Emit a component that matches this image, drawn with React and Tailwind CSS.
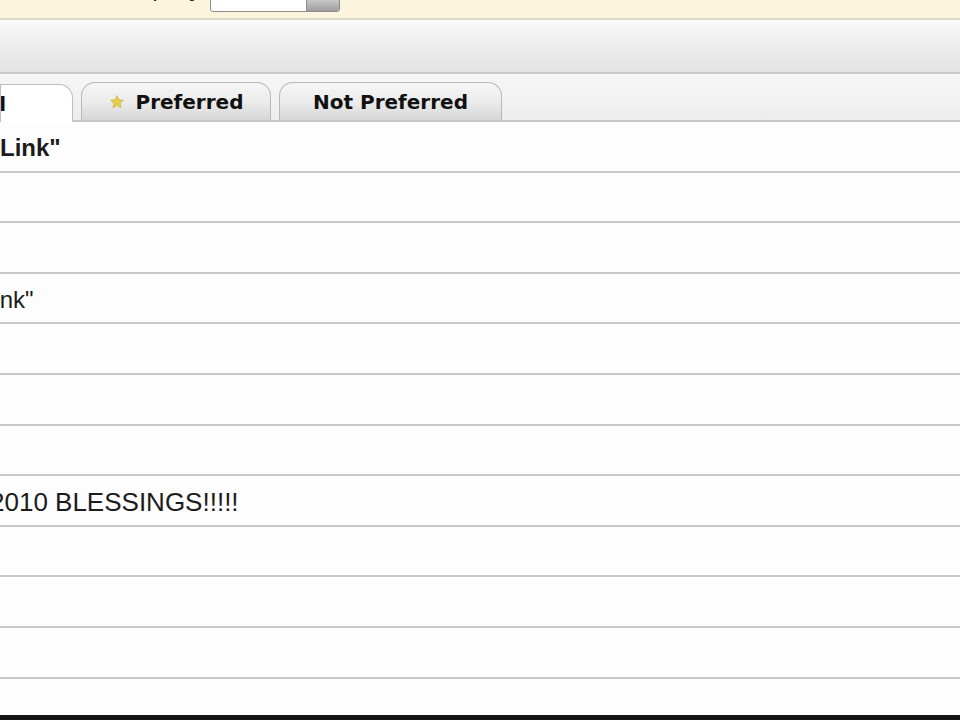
import React from "react";

const tabs = [
  { label: "Preferred", star: true, width: "w-[190px]" },
  { label: "Not Preferred", star: false, width: "w-[223px]" },
];

// rows of the list; only some carry a visible title
const rows = [
  { text: "Link\"", bold: true, shift: "ml-0" },
  null,
  null,
  { text: "Link\"", bold: false, shift: "ml-[-19px]" },
  null,
  null,
  null,
  { text: "2010 BLESSINGS!!!!!", bold: false, shift: "ml-[-10px]", big: true },
  null,
  null,
  null,
  null,
];

const Star = () => (
  <svg width="16" height="16" viewBox="0 0 24 24" className="shrink-0">
    <path
      d="M12 2.5l2.9 6.1 6.6.8-4.9 4.6 1.3 6.6L12 17.3l-5.9 3.3 1.3-6.6-4.9-4.6 6.6-.8z"
      fill="#e6cd52"
      stroke="#c9ad2a"
      strokeWidth="1"
    />
  </svg>
);

export default function App() {
  return (
    <div className="w-[960px] h-[720px] overflow-hidden bg-[#fdfdfd] flex flex-col font-['Liberation_Sans',Arial,sans-serif]">
      {/* filter bar */}
      <div className="h-[20px] shrink-0 bg-[#fcf4dd] border-b-2 border-[#dcd7c8] flex overflow-hidden">
        <span className="w-[96px] ml-[114px] mt-[-22px] text-[24px] leading-[20px] text-[#222] font-['DejaVu_Sans',sans-serif] whitespace-nowrap overflow-hidden">
          Display)
        </span>
        <div className="mt-[-5px] h-[17px] w-[130px] flex border border-[#8d8d8d] rounded-b-[3px] bg-white overflow-hidden">
          <div className="flex-1" />
          <div className="w-[33px] bg-gradient-to-b from-[#d8d8d8] to-[#9e9e9e] border-l border-[#8d8d8d]" />
        </div>
      </div>

      {/* toolbar band */}
      <div className="h-[54px] shrink-0 bg-gradient-to-b from-[#fafafa] via-[#ededed] to-[#e3e3e3] border-b-2 border-[#c9c9c9]" />

      {/* tab strip */}
      <div className="h-[48px] shrink-0 bg-gradient-to-b from-[#f7f7f7] to-[#ececec] border-b-2 border-[#c6c6c6] flex items-end gap-[8px] font-['DejaVu_Sans',Verdana,sans-serif] font-bold text-[20px] text-[#111]">
        <div className="w-[73px] h-[38px] bg-white border border-b-0 border-[#bdbdbd] rounded-tr-[14px] flex items-center -mb-[2px] overflow-hidden">
          <span className="ml-[-24px] whitespace-nowrap">All</span>
        </div>
        {tabs.map((t) => (
          <div
            key={t.label}
            className={`${t.width} h-[38px] rounded-t-[14px] border border-b-0 border-[#b9b9b9] bg-gradient-to-b from-[#f6f6f6] via-[#ececec] to-[#d6d6d6] flex items-center justify-center gap-[11px]`}
          >
            {t.star && <Star />}
            <span>{t.label}</span>
          </div>
        ))}
      </div>

      {/* list */}
      <div className="flex-1 min-h-0 flex flex-col overflow-hidden">
        {rows.map((r, i) => (
          <div
            key={i}
            className="h-[50.6px] shrink-0 border-b-2 border-[#c8c8c8] flex items-center overflow-hidden pt-[4px]"
          >
            {r && (
              <span
                className={`${r.shift} whitespace-nowrap text-[#1c1c1c] ${
                  r.bold ? "font-bold" : "font-normal"
                } ${r.big ? "text-[26px]" : "text-[24px]"} leading-none`}
              >
                {r.text}
              </span>
            )}
          </div>
        ))}
      </div>
      <div className="h-[5px] shrink-0 bg-[#141414]" />
    </div>
  );
}
